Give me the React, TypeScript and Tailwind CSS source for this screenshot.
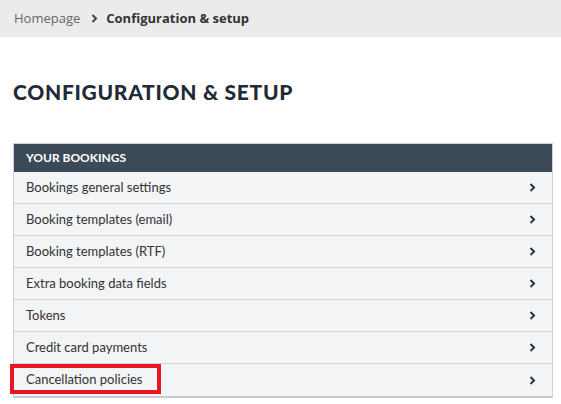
import React from "react";

const items = [
  "Bookings general settings",
  "Booking templates (email)",
  "Booking templates (RTF)",
  "Extra booking data fields",
  "Tokens",
  "Credit card payments",
  "Cancellation policies",
];

function Chevron() {
  return (
    <svg width="7" height="9" viewBox="0 0 7 9" className="shrink-0">
      <path d="M1.5 1 L5 4.5 L1.5 8" fill="none" stroke="#2b3440" strokeWidth="2" />
    </svg>
  );
}

export default function App() {
  return (
    <div className="min-h-[404px] w-[561px] bg-white font-['Lato',sans-serif] text-[#333]">
      <div className="flex h-[37px] items-center bg-[#ebebeb] pl-[14px] font-['Open_Sans',sans-serif] text-[13px]">
        <span className="text-[#666]">Homepage</span>
        <svg width="7" height="9" viewBox="0 0 7 9" className="ml-[11px] mr-[8px]">
          <path d="M1.5 1 L5 4.5 L1.5 8" fill="none" stroke="#444" strokeWidth="2" />
        </svg>
        <span className="font-bold text-[#333]">Configuration &amp; setup</span>
      </div>

      <h1 className="ml-[13px] mt-[42px] text-[21px] font-black leading-[26px] tracking-[0.7px] text-[#1f2b36]">
        CONFIGURATION &amp; SETUP
      </h1>

      <div className="ml-[13px] mt-[38px] w-[540px] border-x border-t border-b-[2px] border-[#d0d2d5] border-b-[#c9cacc]">
        <div className="flex h-[28px] items-center bg-[#3c4a57] pl-[12px] text-[12px] font-bold text-white">
          YOUR BOOKINGS
        </div>
        {items.map((label, i) => (
          <div
            key={label}
            className={`flex h-[32px] items-center justify-between bg-[#f3f4f6] pl-[12px] pr-[16px] text-[13px] text-[#333] ${
              i < items.length - 1 ? "border-b border-[#d3d4d6]" : ""
            }`}
          >
            {i === items.length - 1 ? (
              <span className="relative">
                {label}
                <span className="pointer-events-none absolute -left-[16px] -top-[6px] h-[30px] w-[151px] border-[4px] border-[#e8161f]" />
              </span>
            ) : (
              <span>{label}</span>
            )}
            <Chevron />
          </div>
        ))}
      </div>
    </div>
  );
}
